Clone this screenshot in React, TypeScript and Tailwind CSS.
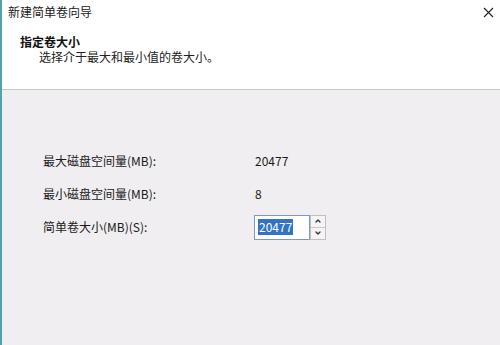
import { ChevronUp, ChevronDown } from 'lucide-react';

const font = { fontFamily: '"Noto Sans CJK SC", "Noto Sans", sans-serif' };

function Row({ label, value }: { label: string; value: string }) {
  return (
    <div className="flex items-center h-[20px]">
      <div className="w-[212px] text-[12px] text-[#1a1a1a]">{label}</div>
      <div className="text-[12px] text-[#1a1a1a]">{value}</div>
    </div>
  );
}

export default function App() {
  return (
    <div className="w-[500px] h-[345px] overflow-hidden flex border-l-2 border-[#5a9ea8] bg-white" style={font}>
      <div className="flex-1 flex flex-col">
        <div className="h-[90px] bg-white border-b border-[#c8c8c8] flex flex-col">
          <div className="flex items-center justify-between pl-[6px] pr-[6px] pt-[3px] h-[20px]">
            <span className="text-[12px] text-[#1a1a1a]">新建简单卷向导</span>
            <svg width="11" height="11" viewBox="0 0 11 11" className="mt-[2px]">
              <path d="M1 1 L10 10 M10 1 L1 10" stroke="#222" strokeWidth="1.1" />
            </svg>
          </div>
          <div className="pl-[18px] pt-[15px] text-[12px] font-bold text-[#111] leading-[14px]">指定卷大小</div>
          <div className="pl-[37px] pt-[1px] text-[12px] text-[#222] leading-[14px]">选择介于最大和最小值的卷大小。</div>
        </div>
        <div className="flex-1 bg-[#f0eef0] pl-[41px] pt-[61px] flex flex-col gap-[13px]">
          <Row label="最大磁盘空间量(MB):" value="20477" />
          <Row label="最小磁盘空间量(MB):" value="8" />
          <div className="flex items-center h-[20px]">
            <div className="w-[211px] text-[12px] text-[#1a1a1a]">简单卷大小(MB)(S):</div>
            <div className="flex items-center">
              <div className="w-[56px] h-[25px] bg-white border border-[#7a9cc0] flex items-center pl-[3px]">
                <span className="bg-[#3373c4] text-white text-[12px] leading-[16px] px-[1px]">20477</span>
              </div>
              <div className="w-[16px] h-[25px] flex flex-col border border-[#c0c0c0] bg-[#f4f4f4]">
                <div className="flex-1 flex items-center justify-center border-b border-[#c8c8c8]">
                  <ChevronUp size={8} strokeWidth={4} color="#333" />
                </div>
                <div className="flex-1 flex items-center justify-center">
                  <ChevronDown size={8} strokeWidth={4} color="#333" />
                </div>
              </div>
            </div>
          </div>
        </div>
      </div>
    </div>
  );
}
